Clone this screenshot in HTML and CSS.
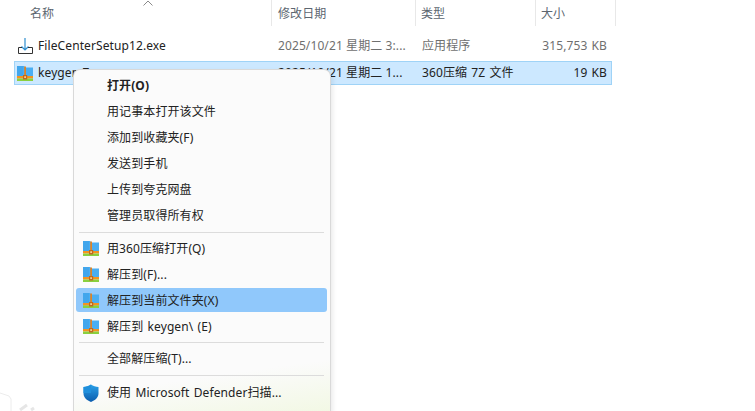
FILE: index.html
```html
<!DOCTYPE html>
<html lang="zh-CN">
<head>
<meta charset="utf-8">
<title>keygen</title>
<link rel="stylesheet" href="styles.css">
</head>
<body>
<svg class="defs" width="0" height="0" aria-hidden="true">
  <defs>
    <symbol id="zip" viewBox="0 0 16 15">
      <path d="M0 0h7l1.500 1.500H16V10H0z" fill="#4aaef2"/>
      <path d="M0 0h6v10H0z" fill="#42a6ec"/>
      <rect y="10" width="16" height="2.500" fill="#f5931f"/>
      <rect y="12.500" width="16" height="2.500" fill="#8ad03e"/>
      <rect x="7.200" y="0.500" width="1.800" height="8.500" fill="#dd8428"/>
      <rect x="6" y="9" width="4.200" height="4.500" fill="#bf6a1e"/>
      <rect x="7.300" y="10.300" width="1.600" height="1.600" fill="#ffe6a8"/>
    </symbol>
  </defs>
</svg>
<main class="explorer">
  <div class="columns">
    <div class="col col-name">名称<svg class="sort" width="10" height="6" viewBox="0 0 10 6"><path d="M0.500 5.500 5 1l4.500 4.500" fill="none" stroke="#8a8a8a"/></svg></div>
    <div class="col col-date">修改日期</div>
    <div class="col col-type">类型</div>
    <div class="col col-size">大小</div>
  </div>
  <div class="row">
    <div class="cell-name"><svg class="file-icon" width="16" height="17" viewBox="0 0 16 17"><path d="M8 0v12M4.500 8.500 8 12l3.500-3.500" fill="none" stroke="#2f8fd0" stroke-width="1.200"/><path d="M5 9.500H1.500v6h14v-6H11" fill="none" stroke="#333"/></svg><span class="filename">FileCenterSetup12.exe</span></div>
    <div class="cell-date">2025/10/21 星期二 3:...</div>
    <div class="cell-type">应用程序</div>
    <div class="cell-size">315,753 KB</div>
  </div>
  <div class="row row-selected">
    <div class="cell-name"><svg class="file-icon" width="16" height="15"><use href="#zip"/></svg><span class="filename">keygen.7z</span></div>
    <div class="cell-date">2025/10/21 星期二 1...</div>
    <div class="cell-type">360压缩 7Z 文件</div>
    <div class="cell-size">19 KB</div>
  </div>
</main>
<svg class="hexagon" width="50" height="24" viewBox="0 0 50 24" aria-hidden="true"><path d="M0 6 9 9l2 3v12" fill="none" stroke="#ececec"/><path d="M20 23l7-5M31 23l3-2" fill="none" stroke="#e6e6e6" stroke-width="3"/></svg>
<nav class="menu">
  <div class="item strong"><span class="icon"></span>打开(O)</div>
  <div class="item"><span class="icon"></span>用记事本打开该文件</div>
  <div class="item"><span class="icon"></span>添加到收藏夹(F)</div>
  <div class="item"><span class="icon"></span>发送到手机</div>
  <div class="item"><span class="icon"></span>上传到夸克网盘</div>
  <div class="item"><span class="icon"></span>管理员取得所有权</div>
  <hr class="sep sep-a">
  <div class="item"><span class="icon"><svg width="16" height="15"><use href="#zip"/></svg></span>用360压缩打开(Q)</div>
  <div class="item"><span class="icon"><svg width="16" height="15"><use href="#zip"/></svg></span>解压到(F)...</div>
  <div class="item active"><span class="icon"><svg width="16" height="15"><use href="#zip"/></svg></span>解压到当前文件夹(X)</div>
  <div class="item"><span class="icon"><svg width="16" height="15"><use href="#zip"/></svg></span>解压到 keygen\ (E)</div>
  <hr class="sep sep-b">
  <div class="item"><span class="icon"></span>全部解压缩(T)...</div>
  <hr class="sep sep-c">
  <div class="item"><span class="icon"><svg width="16" height="18" viewBox="0 0 16 18"><defs><linearGradient id="shield" x1="0" y1="0" x2="0" y2="1"><stop offset="0" stop-color="#2aa0e8"/><stop offset="1" stop-color="#0b5cad"/></linearGradient></defs><path d="M8 0.500C6 2 3 3 0.500 3v6.500C0.500 13.500 4 16.500 8 18c4-1.500 7.500-4.500 7.500-8.500V3C13 3 10 2 8 0.500z" fill="url(#shield)"/><path d="M8 0.500V9H0.500V3C3 3 6 2 8 0.500z" fill="#1f8fdc"/></svg></span>使用 Microsoft Defender扫描...</div>
</nav>
</body>
</html>
```
FILE: styles.css
```css
* { box-sizing: border-box; }
html, body { margin: 0; height: 100%; }
body {
  position: relative;
  width: 755px;
  height: 411px;
  overflow: hidden;
  background: #fff;
  font: 12px/16px "Noto Sans", "Noto Sans CJK SC", sans-serif;
  letter-spacing: 0.1px;
  word-spacing: 1px;
  color: #2b2b2b;
}
.defs { position: absolute; }
.explorer { padding-left: 14px; width: 616px; }
.columns {
  display: grid;
  grid-template-columns: 258px 144px 120px 80px;
  height: 26px;
  color: #5c6670;
}
.col {
  position: relative;
  padding: 6px 0 0 16px;
  border-right: 1px solid #e8e8e8;
}
.col-date { padding-left: 6px; }
.col-type { padding-left: 5px; }
.col-size { padding-left: 5px; }
.sort { position: absolute; left: 129px; top: 0; }
.row {
  display: grid;
  grid-template-columns: 257px 144px 120px 77px;
  align-items: center;
  height: 24px;
  margin-top: 8px;
  color: #6f6f6f;
  width: 598px;
}
.row-selected {
  margin-top: 3px;
  background: #cce8ff;
  outline: 1px solid #9fd3f7;
  outline-offset: -1px;
  color: #222;
}
.cell-name { display: flex; align-items: center; gap: 5px; padding-left: 3px; color: #222; }
.file-icon { flex: none; }
.filename { white-space: nowrap; }
.cell-date { padding-left: 7px; white-space: nowrap; word-spacing: 0; }
.cell-type { padding-left: 7px; white-space: nowrap; }
.cell-size { padding-right: 5px; text-align: right; white-space: nowrap; }
.hexagon { position: absolute; left: 0; bottom: 0; }
.menu {
  position: absolute;
  left: 73px;
  top: 69px;
  width: 258px;
  height: 343px;
  padding: 2px 3px 0 2px;
  background: linear-gradient(172deg, #fbfbfb 86%, #f2f8e4 100%);
  border: 1px solid #d9d9d9;
  border-bottom: 0;
  border-radius: 7px 7px 0 0;
  box-shadow: 2px 2px 4px rgba(0, 0, 0, 0.08);
  color: #222;
}
.item {
  display: flex;
  align-items: center;
  height: 26px;
  padding-top: 1px;
  white-space: nowrap;
  border-radius: 3px;
}
.strong { font-weight: 700; }
.active { height: 24px; margin: 1px 0; background: #90c8fb; }
.icon {
  flex: none;
  width: 31px;
  display: flex;
  justify-content: flex-end;
  padding-right: 8px;
}
.icon svg { display: block; }
.sep {
  height: 1px;
  margin: 0 3px;
  border: 0;
  background: #dcdcdc;
}
.sep-a { margin-top: 4px; margin-bottom: 2px; }
.sep-b { margin-top: 3px; margin-bottom: 2px; }
.sep-c { margin-top: 4px; margin-bottom: 3px; }
```
